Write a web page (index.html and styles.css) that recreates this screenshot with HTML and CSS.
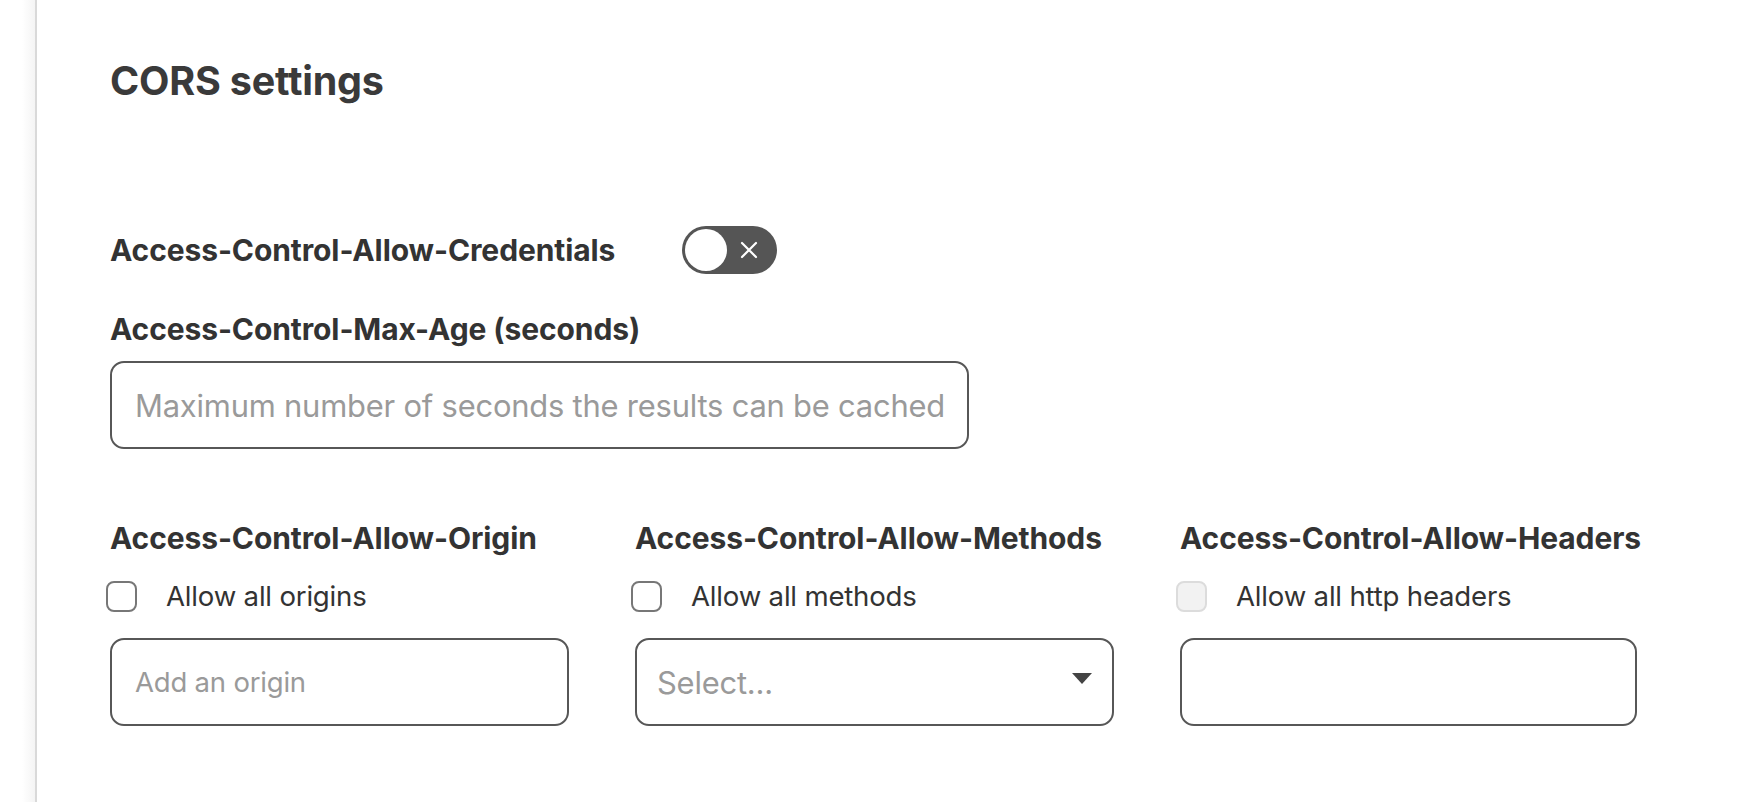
FILE: index.html
```html
<!DOCTYPE html>
<html lang="en">
<head>
<meta charset="utf-8">
<title>CORS settings</title>
<link rel="stylesheet" href="styles.css">
</head>
<body>
<div class="page">
  <aside class="sidebar"></aside>
  <main class="content">
    <h1 class="title">CORS settings</h1>

    <div class="toggle-row">
      <span class="label">Access-Control-Allow-Credentials</span>
      <span class="toggle">
        <span class="knob"></span>
        <svg class="toggle-x" viewBox="0 0 22 22" width="22" height="22"><path d="M4 4 L18 18 M18 4 L4 18" stroke="#fff" stroke-width="2.2" stroke-linecap="round" fill="none"/></svg>
      </span>
    </div>

    <div class="field">
      <label class="label">Access-Control-Max-Age (seconds)</label>
      <div class="input wide"><span class="placeholder">Maximum number of seconds the results can be cached</span></div>
    </div>

    <div class="columns">
      <div class="col">
        <div class="label">Access-Control-Allow-Origin</div>
        <div class="check-row"><span class="checkbox"></span><span class="check-text">Allow all origins</span></div>
        <div class="input"><span class="placeholder small">Add an origin</span></div>
      </div>
      <div class="col">
        <div class="label">Access-Control-Allow-Methods</div>
        <div class="check-row"><span class="checkbox"></span><span class="check-text">Allow all methods</span></div>
        <div class="input select"><span class="placeholder">Select...</span><svg class="caret" viewBox="0 0 20 11" width="20" height="11"><path d="M0 0 H20 L10 11 Z" fill="#444"/></svg></div>
      </div>
      <div class="col">
        <div class="label">Access-Control-Allow-Headers</div>
        <div class="check-row"><span class="checkbox disabled"></span><span class="check-text">Allow all http headers</span></div>
        <div class="input"></div>
      </div>
    </div>
  </main>
</div>
</body>
</html>
```

FILE: styles.css
```css
* { box-sizing: border-box; }

html, body {
  margin: 0;
  padding: 0;
  background: #fff;
  font-family: Inter, "Noto Sans", "Liberation Sans", sans-serif;
  color: #333;
}

.page {
  display: flex;
  min-height: 802px;
}

.sidebar {
  width: 37px;
  flex: none;
  background: linear-gradient(to right, #ffffff 0, #ffffff 22px, #f4f4f4 35px);
  border-right: 2px solid #d9d9d9;
}

.content {
  flex: 1;
  padding: 58px 0 0 73px;
}

.title {
  margin: 0;
  font-size: 39.5px;
  line-height: 46px;
  font-weight: 700;
  color: #3a3a3a;
  letter-spacing: -0.2px;
}

.label {
  display: block;
  font-size: 30px;
  line-height: 36px;
  font-weight: 700;
  color: #333;
  letter-spacing: -0.1px;
  white-space: nowrap;
}

.toggle-row {
  display: flex;
  align-items: center;
  gap: 67px;
  margin-top: 121px;
  height: 50px;
}

.toggle {
  position: relative;
  width: 95px;
  height: 48px;
  border-radius: 24px;
  background: #555;
  display: flex;
  align-items: center;
  justify-content: flex-end;
  padding-right: 17px;
}

.knob {
  position: absolute;
  left: 3px;
  top: 3px;
  width: 42px;
  height: 42px;
  border-radius: 50%;
  background: #fff;
}

.toggle-x { display: block; }

.field {
  margin-top: 36px;
}

.input {
  margin-top: 14px;
  height: 88px;
  border: 2px solid #575757;
  border-radius: 14px;
  display: flex;
  align-items: center;
  padding: 0 23px;
  background: #fff;
}

.input.wide { width: 859px; }

.placeholder {
  font-size: 30.9px;
  color: #9a9a9a;
  white-space: nowrap;
  letter-spacing: -0.2px;
}

.placeholder.small {
  font-size: 27.5px;
}

.columns {
  display: flex;
  gap: 66px;
  margin-top: 71px;
}

.col { flex: none; }
.col:nth-child(1) { width: 459px; }
.col:nth-child(2) { width: 479px; }
.col:nth-child(3) { width: 457px; }

.check-row {
  display: flex;
  align-items: center;
  height: 36px;
  margin-top: 22px;
  margin-left: -4px;
}

.checkbox {
  width: 31px;
  height: 31px;
  border: 2px solid #777;
  border-radius: 8px;
  background: #fff;
  flex: none;
}

.checkbox.disabled {
  border-color: #dcdcdc;
  background: #f2f2f2;
}

.check-text {
  margin-left: 29px;
  font-size: 27.6px;
  color: #333;
  letter-spacing: -0.2px;
  white-space: nowrap;
}

.col .input {
  margin-top: 24px;
}

.select {
  justify-content: space-between;
  padding-left: 20px;
  padding-right: 20px;
}

.caret { display: block; margin-top: -8px; }
```
